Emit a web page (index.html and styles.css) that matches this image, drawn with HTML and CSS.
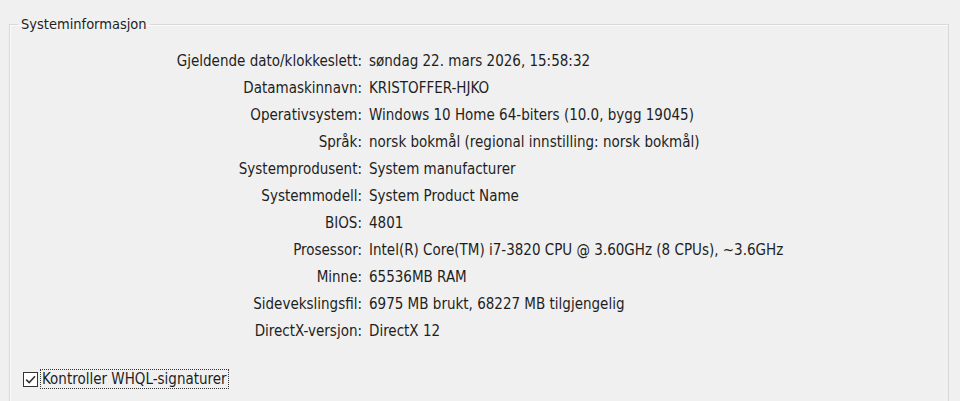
FILE: index.html
```html
<!DOCTYPE html>
<html lang="no">
<head>
<meta charset="utf-8">
<title>Systeminformasjon</title>
<link rel="stylesheet" href="styles.css">
</head>
<body>
<div class="page">
  <fieldset class="group">
    <legend class="group-title">Systeminformasjon</legend>
    <div class="info">
      <div class="label">Gjeldende dato/klokkeslett:</div><div class="value">søndag 22. mars 2026, 15:58:32</div>
      <div class="label">Datamaskinnavn:</div><div class="value">KRISTOFFER-HJKO</div>
      <div class="label">Operativsystem:</div><div class="value">Windows 10 Home 64-biters (10.0, bygg 19045)</div>
      <div class="label">Språk:</div><div class="value">norsk bokmål (regional innstilling: norsk bokmål)</div>
      <div class="label">Systemprodusent:</div><div class="value">System manufacturer</div>
      <div class="label">Systemmodell:</div><div class="value">System Product Name</div>
      <div class="label">BIOS:</div><div class="value">4801</div>
      <div class="label">Prosessor:</div><div class="value">Intel(R) Core(TM) i7-3820 CPU @ 3.60GHz (8 CPUs), ~3.6GHz</div>
      <div class="label">Minne:</div><div class="value">65536MB RAM</div>
      <div class="label">Sidevekslingsfil:</div><div class="value">6975 MB brukt, 68227 MB tilgjengelig</div>
      <div class="label">DirectX-versjon:</div><div class="value">DirectX 12</div>
    </div>
    <label class="check">
      <span class="box"><svg width="13" height="13" viewBox="0 0 13 13"><path d="M2.2 6.6 L5.2 9.6 L11 3.2" fill="none" stroke="#333" stroke-width="1.6"/></svg></span>
      <span class="check-text">Kontroller WHQL-signaturer</span>
    </label>
  </fieldset>
</div>
</body>
</html>
```
FILE: styles.css
```css
html, body {
  margin: 0;
  padding: 0;
  background: #f0f0f0;
}
body {
  font-family: "DejaVu Sans Condensed", "DejaVu Sans", sans-serif;
  font-size: 15px;
  color: #1e1e1e;
  height: 401px;
  overflow: hidden;
}
.page {
  padding: 16px 11px 0 9px;
}
.group {
  margin: 0;
  padding: 0 0 40px 0;
  border: 1px solid #d9d9d9;
  box-shadow: 1px 1px 0 #fbfbfb inset;
  min-width: 0;
}
.group-title {
  margin-left: 8px;
  padding: 0 3px;
  line-height: 16px;
  font-size: 14.5px;
}
.info {
  display: grid;
  grid-template-columns: 352px auto;
  column-gap: 7px;
  grid-auto-rows: 27px;
  margin-top: 15px;
  align-items: center;
}
.label {
  text-align: right;
  white-space: nowrap;
}
.value {
  white-space: nowrap;
}
.check {
  display: flex;
  align-items: center;
  margin: 26px 0 0 13px;
  gap: 3px;
}
.box {
  width: 13px;
  height: 13px;
  border: 1px solid #333;
  background: #fff;
  display: flex;
  align-items: center;
  justify-content: center;
}
.check-text {
  outline: 1px dotted #333;
  padding: 0 1px;
}
```
